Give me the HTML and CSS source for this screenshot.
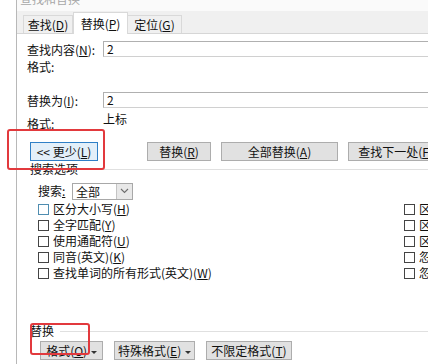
FILE: index.html
```html
<!DOCTYPE html>
<html lang="zh-CN">

<head>
    <meta charset="UTF-8">
    <meta name="viewport" content="width=device-width, initial-scale=1.0">
    <title>查找和替换</title>
    <link rel="stylesheet" href="styles.css">
</head>

<body>
    <div class="dialog">
        <div class="titlebar"><span>查找和替换</span></div>

        <div class="tabs">
            <div class="tab tab-find">查找(<u>D</u>)</div>
            <div class="tab tab-replace active">替换(<u>P</u>)</div>
            <div class="tab tab-goto">定位(<u>G</u>)</div>
        </div>

        <div class="panel">
            <div class="field field-find">
                <span class="label">查找内容(<u>N</u>):</span>
                <div class="input">2</div>
            </div>
            <div class="format format-find">
                <span class="label">格式:</span>
            </div>
            <div class="field field-replace">
                <span class="label">替换为(<u>I</u>):</span>
                <div class="input">2</div>
            </div>
            <div class="format format-replace">
                <span class="label">格式:</span>
                <span class="value">上标</span>
            </div>
        </div>

        <div class="actions">
            <button class="btn btn-less focused">&lt;&lt; 更少(<u>L</u>)</button>
            <button class="btn btn-replace">替换(<u>R</u>)</button>
            <button class="btn btn-all">全部替换(<u>A</u>)</button>
            <button class="btn btn-next">查找下一处(<u>F</u>)</button>
        </div>

        <div class="group group-search">
            <span>搜索选项</span>
            <div class="rule"></div>
        </div>

        <div class="search-row">
            <span class="search-label">搜索<u>:</u></span>
            <div class="select">
                <span class="select-value">全部</span>
                <span class="select-arrow">
                    <svg width="9" height="6" viewBox="0 0 9 6">
                        <path d="M1 1 L4.5 4.5 L8 1" fill="none" stroke="#6d6d6d" stroke-width="1.1"/>
                    </svg>
                </span>
            </div>
        </div>

        <div class="options">
            <label class="check"><span class="box hover"></span>区分大小写(<u>H</u>)</label>
            <label class="check"><span class="box"></span>区分前缀(<u>X</u>)</label>
            <label class="check"><span class="box"></span>全字匹配(<u>Y</u>)</label>
            <label class="check"><span class="box"></span>区分后缀(<u>T</u>)</label>
            <label class="check"><span class="box"></span>使用通配符(<u>U</u>)</label>
            <label class="check"><span class="box"></span>区分全/半角(<u>M</u>)</label>
            <label class="check"><span class="box"></span>同音(英文)(<u>K</u>)</label>
            <label class="check"><span class="box"></span>忽略标点符号(<u>S</u>)</label>
            <label class="check"><span class="box"></span>查找单词的所有形式(英文)(<u>W</u>)</label>
            <label class="check"><span class="box"></span>忽略空格(<u>W</u>)</label>
        </div>

        <div class="group group-replace">
            <span>替换</span>
            <div class="rule"></div>
        </div>

        <div class="actions actions-bottom">
            <button class="btn btn-format">格式(<u>O</u>) <span class="caret"></span></button>
            <button class="btn btn-special">特殊格式(<u>E</u>) <span class="caret"></span></button>
            <button class="btn btn-noformat">不限定格式(<u>T</u>)</button>
        </div>
    </div>

    <div class="mark mark-less"></div>
    <div class="mark mark-format"></div>
</body>

</html>
```

FILE: styles.css
```css
* {
    box-sizing: border-box;
}

body {
    margin: 0;
    width: 428px;
    height: 364px;
    overflow: hidden;
    position: relative;
    background: #fff;
    color: #111;
    font-family: "Noto Sans CJK SC", "Microsoft YaHei", sans-serif;
    font-size: 12px;
    line-height: 16px;
}

u {
    text-decoration: underline;
    text-underline-offset: 1px;
}

.dialog {
    margin-left: 16px;
    width: 600px;
    height: 364px;
    border-left: 1px solid #b8b8b8;
    background: #fff;
}

.titlebar {
    height: 11px;
    overflow: hidden;
    background: #fafafa;
    padding-left: 3px;
}

.titlebar span {
    display: block;
    margin-top: -8px;
    line-height: 14px;
    color: #a8a8a8;
}

.tabs {
    height: 23px;
    display: flex;
    align-items: flex-end;
    padding-left: 6px;
    background: #f0f0f0;
    border-bottom: 1px solid #d6d6d6;
}

.tab {
    height: 18px;
    line-height: 17px;
    text-align: center;
    border: 1px solid #d9d9d9;
    border-bottom: none;
    background: #f0f0f0;
}

.tab + .tab {
    border-left: none;
}

.tab-find {
    width: 50px;
}

.tab-replace {
    width: 55px;
}

.tab-goto {
    width: 54px;
}

.tab.active {
    height: 22px;
    line-height: 21px;
    margin-bottom: -1px;
    background: #fff;
    border-left: 1px solid #d9d9d9;
    position: relative;
}

.panel {
    height: 96px;
    padding: 7px 0 0 10px;
    background: #fff;
}

.field {
    display: flex;
    align-items: center;
    height: 16px;
}

.field-replace {
    margin-top: 17px;
}

.label {
    width: 76px;
    flex: none;
}

.field .label {
    padding-top: 2px;
}

.input {
    flex: 1;
    height: 16px;
    line-height: 14px;
    padding-left: 3px;
    border: 1px solid #b0b0b0;
    border-bottom-color: #d0d0d0;
    background: #fff;
}

.format {
    display: flex;
    align-items: flex-start;
    margin-top: 2px;
}

.format-replace .label {
    margin-top: 6px;
}

.format-replace .value {
    margin-top: 1px;
}

.actions {
    display: flex;
    gap: 10px;
    padding-left: 13px;
    margin-top: 12px;
}

.btn {
    height: 19px;
    padding: 0;
    font-family: inherit;
    font-size: 12px;
    line-height: 16px;
    color: #111;
    background: #e1e1e1;
    border: 1px solid #adadad;
    border-radius: 0;
}

.btn.focused {
    background: #e3eff9;
    border-color: #2f7fc6;
}

.btn-less {
    width: 68px;
    margin-right: 39px;
}

.btn-replace {
    width: 64px;
}

.btn-all {
    width: 117px;
}

.btn-next {
    width: 95px;
}

.group {
    display: flex;
    align-items: center;
    height: 14px;
    padding-left: 13px;
}

.group-search {
    margin-top: 1px;
}

.group-replace {
    margin-top: 43px;
}

.rule {
    flex: 1;
    margin-left: 6px;
    border-top: 1px solid #e0e0e0;
}

.search-row {
    display: flex;
    align-items: center;
    height: 16px;
    margin-top: 7px;
    padding-left: 21px;
}

.search-label {
    width: 34px;
}

.select {
    display: flex;
    width: 61px;
    height: 17px;
    border: 1px solid #a8a8a8;
    background: #fff;
}

.select-value {
    flex: 1;
    padding-left: 3px;
    line-height: 15px;
}

.select-arrow {
    width: 16px;
    display: flex;
    align-items: center;
    justify-content: center;
    background: #e8e8e8;
    border-left: 1px solid #c4c4c4;
}

.options {
    display: grid;
    grid-template-columns: 366px auto;
    grid-auto-rows: 16px;
    margin-top: 2px;
    padding-left: 21px;
}

.check {
    display: flex;
    align-items: center;
    white-space: nowrap;
}

.box {
    width: 11px;
    height: 11px;
    margin-right: 4px;
    flex: none;
    border: 1px solid #444;
    background: #fff;
}

.box.hover {
    border-color: #4f8db0;
}

.actions-bottom {
    gap: 11px;
    padding-left: 23px;
    margin-top: 3px;
}

.btn-format {
    width: 63px;
}

.btn-special {
    width: 81px;
}

.btn-noformat {
    width: 86px;
}

.caret {
    display: inline-block;
    width: 0;
    height: 0;
    margin-left: 1px;
    vertical-align: 2px;
    border-left: 3px solid transparent;
    border-right: 3px solid transparent;
    border-top: 3px solid #333;
}

.mark {
    position: absolute;
    border: 2px solid #e2393d;
    border-radius: 3px;
}

.mark-less {
    left: 7px;
    top: 129px;
    width: 98px;
    height: 41px;
}

.mark-format {
    left: 30px;
    top: 323px;
    width: 60px;
    height: 32px;
}
```
